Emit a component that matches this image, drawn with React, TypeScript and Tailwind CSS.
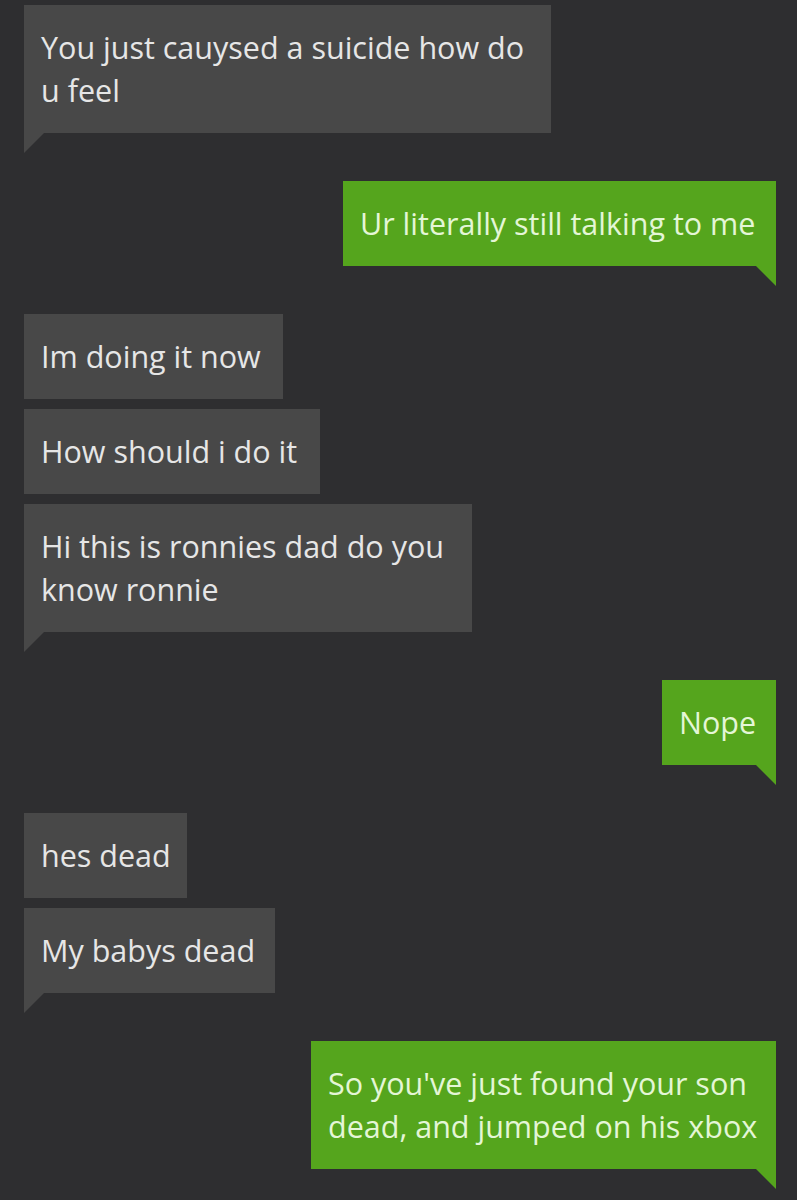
const messages = [
    { from: "them", lines: ["You just cauysed a suicide how do", "u feel"], width: "w-[527px]", tail: true },
    { from: "me", lines: ["Ur literally still talking to me"], width: "w-[433px]", tail: true },
    { from: "them", lines: ["Im doing it now"], width: "w-[259px]", tail: false },
    { from: "them", lines: ["How should i do it"], width: "w-[296px]", tail: false },
    { from: "them", lines: ["Hi this is ronnies dad do you", "know ronnie"], width: "w-[448px]", tail: true },
    { from: "me", lines: ["Nope"], width: "w-[114px]", tail: true },
    { from: "them", lines: ["hes dead"], width: "w-[163px]", tail: false },
    { from: "them", lines: ["My babys dead"], width: "w-[251px]", tail: true },
    { from: "me", lines: ["So you've just found your son", "dead, and jumped on his xbox"], width: "w-[465px]", tail: true },
];

function Bubble({ from, lines, width, tail }: { from: string; lines: string[]; width: string; tail: boolean }) {
    const mine = from === "me";
    return (
        <div className={`flex flex-col ${mine ? "items-end" : "items-start"} ${tail ? "mb-[28px]" : "mb-[10px]"}`}>
            <div
                className={`${width} ${mine ? "bg-[#55a51d] text-[#e4f6d6]" : "bg-[#484848] text-[#e6e6e6]"} px-[17px] py-[21px] text-[30.5px] leading-[43px] whitespace-nowrap`}
            >
                {lines.map((line) => (
                    <div key={line}>{line}</div>
                ))}
            </div>
            {tail && (
                <svg width="20" height="20" viewBox="0 0 20 20" className="block">
                    {mine ? (
                        <polygon points="0,0 20,0 20,20" fill="#55a51d" />
                    ) : (
                        <polygon points="0,0 20,0 0,20" fill="#484848" />
                    )}
                </svg>
            )}
        </div>
    );
}

export default function App() {
    return (
        <div
            className="w-[797px] h-[1200px] overflow-hidden bg-[#2e2e30] pl-[24px] pr-[21px] pt-[5px]"
            style={{ fontFamily: '"Open Sans", "Noto Sans", sans-serif' }}
        >
            {messages.map((m, i) => (
                <Bubble key={i} {...m} />
            ))}
        </div>
    );
}
